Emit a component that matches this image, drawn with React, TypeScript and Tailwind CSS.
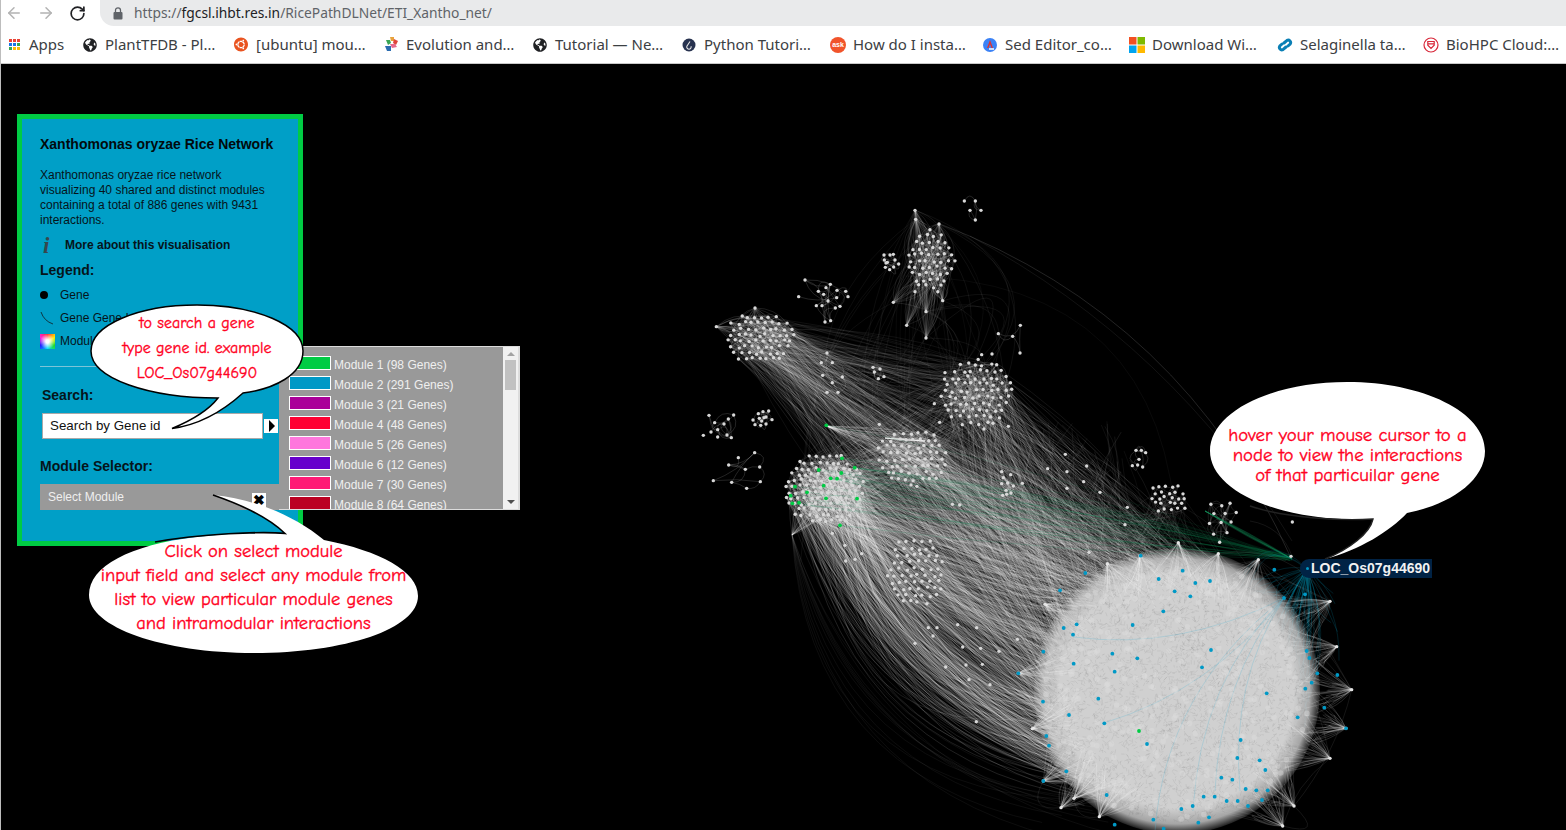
import { ArrowLeft, ArrowRight, RotateCw } from "lucide-react";
import type { ReactNode } from "react";
import { FaGlobeAmericas, FaUbuntu } from "react-icons/fa";

// small seeded random so the graph is the same on every load
let seed = 1337;
const rnd = () => {
  seed = (seed + 0x6d2b79f5) | 0;
  let t = Math.imul(seed ^ (seed >>> 15), 1 | seed);
  t = (t + Math.imul(t ^ (t >>> 7), 61 | t)) ^ t;
  return ((t ^ (t >>> 14)) >>> 0) / 4294967296;
};
const between = (a: number, b: number) => a + rnd() * (b - a);

type Pt = [number, number];
type Edge = { d: string; c: string; o: number; w: number };

const curve = (a: Pt, b: Pt, bend: number) => {
  const dx = b[0] - a[0];
  const dy = b[1] - a[1];
  const len = Math.hypot(dx, dy) || 1;
  const cx = (a[0] + b[0]) / 2 + (dy / len) * bend * 2;
  const cy = (a[1] + b[1]) / 2 - (dx / len) * bend * 2;
  return `M${a[0].toFixed(1)} ${a[1].toFixed(1)}Q${cx.toFixed(1)} ${cy.toFixed(1)} ${b[0].toFixed(1)} ${b[1].toFixed(1)}`;
};

const lattice = (cx: number, cy: number, rx: number, ry: number, step: number) => {
  const out: Pt[] = [];
  for (let y = -ry; y <= ry; y += step * 0.86) {
    const row = Math.round((y + ry) / (step * 0.86));
    for (let x = -rx; x <= rx; x += step) {
      const px = x + (row % 2 ? step / 2 : 0) + between(-1.6, 1.6);
      const py = y + between(-1.6, 1.6);
      if ((px * px) / (rx * rx) + (py * py) / (ry * ry) <= 1) out.push([cx + px, cy + py]);
    }
  }
  return out;
};

const fromZoom6 = (l: number[][]) => l.map(([x, y]): Pt => [690 + x / 3, 190 + y / 3]);
const fromZoom5 = (l: number[][]) => l.map(([x, y]): Pt => [1000 + x / 3, 370 + y / 3]);
const fromZoom8 = (l: number[][]) => l.map(([x, y]): Pt => [770 + x / 3, 430 + y / 3]);
const fromZoom7 = (l: number[][]) => l.map(([x, y]): Pt => [1000 + x / 3, 540 + y / 3]);

const smallGroups: Pt[][] = [
  fromZoom6([[823, 30], [856, 30], [840, 58], [873, 58], [856, 87]]),
  fromZoom6([[582, 192], [600, 192], [610, 190], [615, 207], [626, 219], [588, 216], [583, 207], [586, 229], [599, 236], [611, 228], [592, 214]]),
  fromZoom6([[345, 267], [326, 317], [421, 280], [385, 301], [408, 290], [441, 298], [467, 301], [401, 310], [474, 317], [440, 320], [414, 330], [379, 344], [396, 344], [450, 346], [436, 351], [405, 393], [422, 389]]),
  fromZoom6([[925, 428], [968, 436], [991, 403], [990, 486]]),
  fromZoom6([[411, 486], [394, 515], [427, 515], [398, 553], [457, 558], [427, 575], [411, 604], [444, 604]]),
  fromZoom6([[549, 529], [570, 534], [553, 543], [582, 557], [565, 563]]),
  fromZoom6([[57, 673], [131, 672], [74, 695], [102, 699], [115, 684], [83, 716], [63, 723], [40, 733], [83, 738], [111, 732], [124, 740]]),
  fromZoom6([[205, 668], [219, 662], [236, 660], [189, 687], [208, 682], [222, 680], [228, 678], [246, 686], [195, 701], [212, 703], [228, 699], [215, 690]]),
  fromZoom6([[194, 785], [145, 800], [116, 822], [166, 835], [209, 828], [70, 869], [125, 874], [211, 872], [170, 892]]),
  fromZoom5([[408, 238], [424, 238], [437, 245], [417, 265], [397, 284], [413, 282], [428, 288]]),
  fromZoom8([[695, 122], [722, 131], [695, 158], [713, 156], [730, 165], [757, 157], [708, 178], [723, 186], [698, 193], [710, 190], [700, 140]]),
];
const loose: Pt[] = [
  ...fromZoom6([[675, 58], [677, 85], [747, 99], [610, 334], [650, 403], [708, 362], [758, 329], [708, 441], [675, 302], [79, 407], [195, 351], [875, 491], [906, 489], [765, 545], [733, 638], [749, 694], [955, 706], [568, 700]]),
  ...fromZoom5([[196, 250], [143, 293], [201, 302], [260, 285], [251, 332], [201, 352], [300, 364], [375, 461], [267, 544], [382, 409], [877, 453], [873, 556]]),
  ...fromZoom8([[475, 590], [501, 590], [563, 581], [620, 590], [489, 615], [435, 637], [578, 648], [632, 652], [687, 661], [527, 708], [588, 702], [637, 700], [597, 746], [660, 761], [619, 872], [742, 625], [225, 343], [275, 368], [227, 390], [255, 385], [187, 307], [547, 220], [569, 222]]),
];

const clusterA = lattice(760, 337, 36, 27, 7);
const clusterB = lattice(932, 260, 24, 32, 7.4);
const clusterC = lattice(977, 393, 36, 36, 7.6);
const clusterD = lattice(825, 488, 40, 38, 6.8);
const clusterE = lattice(912, 456, 36, 30, 7.6);
const clusterF = lattice(916, 570, 29, 36, 7.8);
const clusterG = lattice(1169, 497, 20, 17, 6.6);
const clusterH = lattice(1222, 518, 18, 24, 11);

const blueNodes = fromZoom7([[422, 44], [256, 96], [180, 148], [548, 89], [476, 114], [586, 126], [630, 120], [524, 151], [571, 166], [490, 211], [398, 252], [230, 250], [191, 261], [219, 281], [130, 332], [337, 338], [412, 352], [221, 368], [344, 392], [55, 397], [295, 473], [129, 482], [207, 522], [313, 547], [139, 585], [147, 614], [441, 609], [199, 691], [130, 720], [320, 762], [344, 851], [460, 836], [491, 863], [544, 804], [578, 795], [595, 845], [627, 829], [611, 767], [644, 767], [680, 780], [713, 780], [744, 795], [786, 777], [737, 744], [769, 748], [803, 748], [664, 710], [697, 716], [796, 687], [779, 658], [712, 651], [722, 597], [800, 457], [606, 379], [633, 327], [823, 86], [852, 171], [915, 160], [920, 330], [928, 351], [952, 397], [1012, 402], [935, 425], [916, 443], [973, 500], [893, 529], [1038, 562]]);
const greenNodes = [
  ...fromZoom8([[216, 82], [146, 117], [254, 110], [214, 126], [182, 142], [201, 143], [161, 164], [75, 167], [111, 184], [62, 194], [168, 202], [261, 203], [67, 217], [87, 215], [210, 283]]),
  ...fromZoom6([[409, 703]]),
  ...fromZoom7([[417, 570]]),
];

const buildGraph = () => {
  const edges: Edge[] = [];
  const top: Edge[] = [];
  const add = (a: Pt, b: Pt, bend: number, c = "#fff", o = 0.16, w = 0.7) => edges.push({ d: curve(a, b, bend), c, o, w });
  const pick = (l: Pt[]) => l[Math.floor(rnd() * l.length)];
  const toMain = (minA: number, maxA: number): Pt => {
    const t = between(minA, maxA);
    const r = between(105, 135);
    return [1177 + Math.cos(t) * r, 690 + Math.sin(t) * r];
  };

  // inside each module
  const inner: [Pt[], number][] = [[clusterA, 200], [clusterB, 150], [clusterC, 210], [clusterD, 400], [clusterE, 110], [clusterF, 10], [clusterG, 26], [clusterH, 34]];
  inner.forEach(([l, n]) => {
    for (let i = 0; i < n; i++) add(pick(l), pick(l), between(-4, 4), "#fff", 0.18, 0.6);
  });
  smallGroups.forEach((l) => {
    for (let i = 0; i < l.length * 1.5; i++) add(pick(l), pick(l), between(-7, 7), "#fff", 0.28, 0.5);
  });

  // module hubs
  const hubsB = fromZoom6([[675, 58], [677, 85], [747, 99], [610, 334], [650, 403], [708, 362], [758, 329], [708, 441]]);
  hubsB.forEach((h) => {
    for (let i = 0; i < 20; i++) add(h, pick(clusterB), between(-8, 8), "#fff", 0.16, 0.6);
  });
  const hubsA = fromZoom6([[79, 407], [195, 351]]);
  hubsA.forEach((h) => {
    for (let i = 0; i < 20; i++) add(h, pick(clusterA), between(-8, 8), "#fff", 0.2, 0.6);
  });
  for (let i = 0; i < 28; i++) add([792, 534], pick(clusterD), between(-5, 5), "#fff", 0.2, 0.6);

  // long arcs above the modules
  for (let i = 0; i < 16; i++) {
    add(pick(hubsB), pick(clusterC), between(10, 70), "#fff", 0.1, 0.6);
    add(pick(hubsB), [between(800, 900), between(440, 560)], between(-70, 10), "#fff", 0.09, 0.6);
    add([915, 208], [between(880, 1020), between(400, 560)], between(-40, 60), "#fff", 0.07, 0.6);
  }
  add([940, 223], [1290, 555], 50, "#fff", 0.28, 0.5);
  add([970, 235], [1292, 540], 30, "#fff", 0.14, 0.5);
  add([905, 275], [1177, 540], 90, "#fff", 0.08, 0.5);
  add([1292, 555], [1250, 520], -8, "#fff", 0.16, 0.5);

  // bundles between modules and the big one, the outer ones hang down to the lower left
  for (let i = 0; i < 300; i++) add(pick(clusterD), toMain(2.0, 3.1), -(30 + 66 * rnd() * rnd()), "#fff", between(0.11, 0.22), 0.7);
  for (let i = 0; i < 12; i++) add([792, 534], [between(1040, 1120), between(790, 840)], -between(60, 86), "#fff", 0.1, 0.5);
  for (let i = 0; i < 420; i++) add(pick(clusterD), toMain(2.7, 4.3), between(-34, 8), "#fff", between(0.1, 0.19), 0.7);
  for (let i = 0; i < 200; i++) add(pick(clusterA), toMain(3.0, 4.7), between(-22, 22), "#fff", between(0.07, 0.15), 0.7);
  for (let i = 0; i < 100; i++) add(pick(clusterA), pick(clusterC), between(-14, 14), "#fff", 0.1, 0.6);
  for (let i = 0; i < 80; i++) add(pick(clusterA), pick(clusterE), between(-14, 14), "#fff", 0.1, 0.6);
  for (let i = 0; i < 60; i++) add(pick(clusterA), pick(clusterF), between(-14, 14), "#fff", 0.1, 0.6);
  for (let i = 0; i < 340; i++) add(pick(clusterE), toMain(2.9, 4.7), between(-26, 26), "#fff", between(0.09, 0.18), 0.7);
  for (let i = 0; i < 280; i++) add(pick(clusterC), toMain(3.3, 5.1), between(-34, 26), "#fff", between(0.08, 0.18), 0.7);
  for (let i = 0; i < 170; i++) add(pick(clusterF), toMain(2.6, 3.7), between(-20, 20), "#fff", 0.12, 0.7);
  for (let i = 0; i < 120; i++) add(pick(clusterD), pick(clusterE), between(-16, 16), "#fff", 0.13, 0.6);
  for (let i = 0; i < 70; i++) add(pick(clusterD), pick(clusterC), between(-20, 20), "#fff", 0.1, 0.6);
  for (let i = 0; i < 50; i++) add(pick(clusterG), toMain(3.6, 5.4), between(-20, 20), "#fff", 0.1, 0.6);
  for (let i = 0; i < 34; i++) add([827, 425], pick(clusterE), between(-3, 3), "#fff", 0.2, 0.7);
  for (let i = 0; i < 18; i++) add([885, 437], [925, 440], between(-1, 1), "#fff", 0.16, 0.8);
  for (let i = 0; i < 55; i++) add(pick(clusterC), pick(clusterE), between(-20, 20), "#fff", 0.11, 0.6);

  // loose field of lines filling the gaps right of the modules
  for (let i = 0; i < 260; i++) add([between(850, 1130), between(420, 540)], [between(1000, 1190), between(510, 640)], between(-25, 25), "#fff", between(0.08, 0.15), 0.6);
  for (let i = 0; i < 140; i++) add(pick(clusterD), [between(1020, 1180), between(530, 620)], between(-18, 18), "#fff", 0.12, 0.6);
  for (let i = 0; i < 90; i++) add(pick(clusterA), [between(1000, 1130), between(470, 600)], between(-18, 18), "#fff", 0.09, 0.6);

  // green links of module 1
  for (let i = 0; i < 30; i++) add(pick(greenNodes.slice(0, 16)), [1290 + between(-4, 4), 557 + between(-3, 3)], between(-14, 18), "#0f8a55", between(0.16, 0.38), 0.6);
  for (let i = 0; i < 8; i++) add([1205, 510], [1292, 558], between(-2, 2), "#12915a", 0.4, 0.7);

  // teal links going out of the hovered node
  for (let i = 0; i < 40; i++) add([1307, 568], toMain(-1.1, 0.4), between(-24, 24), "#00809e", 0.35, 0.6);
  for (let i = 0; i < 24; i++) add([1307, 568], [between(1240, 1340), between(570, 720)], between(-10, 10), "#00809e", 0.4, 0.6);

  // big module: rim hubs fan over its edge
  const rim = fromZoom7([[535, 5], [322, 68], [655, 38], [775, 56], [135, 190], [55, 397], [97, 563], [130, 720], [183, 800], [298, 827], [882, 795], [990, 652], [1038, 562], [1055, 446], [1010, 317], [990, 181], [848, 855], [222, 772], [420, 44]]);
  rim.forEach((h) => {
    const dir = Math.atan2(690 - h[1], 1177 - h[0]);
    for (let i = 0; i < 30; i++) {
      const t = dir + between(-0.7, 0.7);
      const r = between(15, 55);
      top.push({ d: curve(h, [h[0] + Math.cos(t) * r, h[1] + Math.sin(t) * r], between(-3, 3)), c: "#fff", o: 0.22, w: 0.7 });
    }
  });
  for (let i = 0; i < 70; i++) add(pick(rim), pick(rim), between(-22, 22), "#fff", 0.14, 0.6);

  const bigNodes: Pt[] = [];
  for (let i = 0; i < 290; i++) {
    const t = rnd() * 6.283;
    const r = 133 * Math.sqrt(rnd());
    bigNodes.push([1177 + Math.cos(t) * r, 690 + Math.sin(t) * r]);
  }
  const flecks: string[] = [];
  for (let i = 0; i < 4200; i++) {
    const t = rnd() * 6.283;
    const r = 130 * Math.sqrt(rnd());
    const x = 1177 + Math.cos(t) * r;
    const y = 690 + Math.sin(t) * r;
    const a = rnd() * 3.14;
    const l = between(2, 5);
    flecks.push(`M${x.toFixed(1)} ${y.toFixed(1)}l${(Math.cos(a) * l).toFixed(1)} ${(Math.sin(a) * l).toFixed(1)}`);
  }
  return { edges, top, bigNodes, flecks: flecks.join(""), rim };
};

const graph = buildGraph();
const grayNodes: Pt[] = [clusterA, clusterB, clusterC, clusterD, clusterE, clusterF, clusterG, clusterH, ...smallGroups, loose].flat();

const Network = () => (
  <svg className="absolute inset-0" width="1566" height="767" viewBox="0 63 1566 767">
    <defs>
      <radialGradient id="bigFill">
        <stop offset="0.82" stopColor="#d0d0d0" />
        <stop offset="0.93" stopColor="#cfcfcf" stopOpacity="0.8" />
        <stop offset="1" stopColor="#cbcbcb" stopOpacity="0.15" />
      </radialGradient>
    </defs>
    {graph.edges.map((e, i) => (
      <path key={i} d={e.d} fill="none" stroke={e.c} strokeOpacity={e.o} strokeWidth={e.w} />
    ))}
    <circle cx="1177" cy="690" r="143" fill="url(#bigFill)" />
    <path d={graph.flecks} stroke="#000" strokeOpacity="0.07" strokeWidth="0.8" />
    {graph.top.map((e, i) => (
      <path key={i} d={e.d} fill="none" stroke={e.c} strokeOpacity={e.o} strokeWidth={e.w} />
    ))}
    <g fill="none" stroke="#5bb8d4" strokeOpacity="0.4" strokeWidth="0.7">
      <path d="M1073 636Q1180 650 1284 597" />
      <path d="M1104 722Q1210 690 1284 597" />
      <path d="M1155 830Q1165 690 1284 597" />
      <path d="M1193 810Q1200 680 1284 597" />
      <path d="M1215 790Q1220 680 1284 597" />
      <path d="M1240 790Q1230 680 1284 597" />
    </g>
    {graph.bigNodes.map((p, i) => (
      <circle key={i} cx={p[0]} cy={p[1]} r="2.8" fill="#dedede" fillOpacity="0.4" />
    ))}
    {grayNodes.map((p, i) => (
      <circle key={i} cx={p[0]} cy={p[1]} r="1.7" fill="#d8d8d8" />
    ))}
    {graph.rim.map((p, i) => (
      <circle key={i} cx={p[0]} cy={p[1]} r="1.7" fill="#e4e4e4" />
    ))}
    {blueNodes.map((p, i) => (
      <circle key={i} cx={p[0]} cy={p[1]} r="1.9" fill="#0099c6" />
    ))}
    {greenNodes.map((p, i) => (
      <circle key={i} cx={p[0]} cy={p[1]} r="1.9" fill="#00cc44" />
    ))}
  </svg>
);

const GlobeIcon = () => <FaGlobeAmericas className="size-[14px] text-[#202124]" />;

const Bookmark = ({ icon, label, width }: { icon: ReactNode; label: string; width: string }) => (
  <div className={`flex items-center gap-[8px] shrink-0 ${width}`}>
    <span className="flex items-center justify-center size-[14px] shrink-0">{icon}</span>
    <span className="whitespace-nowrap">{label}</span>
  </div>
);

const BrowserChrome = () => (
  <>
    <div className="flex items-center h-[26px] bg-white pl-[4px] shrink-0">
      <ArrowLeft className="size-[18px] text-[#b3b3b3]" strokeWidth={2} />
      <ArrowRight className="size-[18px] ml-[14px] text-[#b3b3b3]" strokeWidth={2} />
      <RotateCw className="size-[17px] ml-[14px] text-[#202124]" strokeWidth={2.4} />
      <div className="flex items-center flex-1 h-[26px] ml-[14px] pl-[13px] rounded-bl-[14px] bg-[#e9eaeb]">
        <svg width="10" height="13" viewBox="0 0 10 13" className="text-[#5f6368]">
          <rect x="0.5" y="5" width="9" height="7.5" rx="1" fill="currentColor" />
          <path d="M2.5 5V3.3a2.5 2.5 0 0 1 5 0V5" fill="none" stroke="currentColor" strokeWidth="1.3" />
        </svg>
        <span className="ml-[11px] text-[13.8px] text-[#5f6368] whitespace-nowrap font-['Noto_Sans',sans-serif]">
          https://<span className="text-[#202124]">fgcsl.ihbt.res.in</span>/RicePathDLNet/ETI_Xantho_net/
        </span>
      </div>
    </div>
    <div className="flex items-center h-[38px] pl-[6px] bg-white border-b border-[#c9c9c9] shrink-0 text-[15px] text-[#3c4043] font-['Noto_Sans',sans-serif]">
      <Bookmark
        width="w-[76px]"
        label="Apps"
        icon={
          <span className="grid grid-cols-3 gap-[1px]">
            {["bg-[#ea4335]", "bg-[#ea4335]", "bg-[#ea4335]", "bg-[#1a73e8]", "bg-[#1a73e8]", "bg-[#34a853]", "bg-[#34a853]", "bg-[#fbbc04]", "bg-[#fbbc04]"].map((c, i) => (
              <i key={i} className={`block size-[3px] ${c}`} />
            ))}
          </span>
        }
      />
      <Bookmark width="w-[151px]" label="PlantTFDB - Pl…" icon={<GlobeIcon />} />
      <Bookmark width="w-[150px]" label="[ubuntu] mou…" icon={<FaUbuntu className="size-[15px] text-[#e95420]" />} />
      <Bookmark
        width="w-[149px]"
        label="Evolution and…"
        icon={
          <svg width="14" height="15" viewBox="0 0 14 15">
            <path d="M6 0h4v4H7z" fill="#e8a33d" />
            <path d="M10 2l4 2-2 4-3-2z" fill="#e0453a" />
            <path d="M2 3h4l1 3-3 2z" fill="#3aa655" />
            <path d="M6 7h5l2 3-5 1z" fill="#e66a8c" />
            <path d="M1 9h6v5H3z" fill="#2b6cb0" />
          </svg>
        }
      />
      <Bookmark width="w-[149px]" label="Tutorial — Ne…" icon={<GlobeIcon />} />
      <Bookmark
        width="w-[149px]"
        label="Python Tutori…"
        icon={
          <svg width="14" height="14" viewBox="0 0 14 14">
            <circle cx="7" cy="7" r="6.5" fill="#27324f" />
            <path d="M8 3.5 5 8a2.2 2.2 0 1 0 4 .3" fill="none" stroke="#e6e6e6" strokeWidth="1.1" />
          </svg>
        }
      />
      <Bookmark
        width="w-[152px]"
        label="How do I insta…"
        icon={
          <span className="flex items-center justify-center shrink-0 size-[16px] rounded-full bg-[#f1542b] text-[7px] font-bold leading-none text-white font-['Liberation_Sans',sans-serif]">
            ask
          </span>
        }
      />
      <Bookmark
        width="w-[147px]"
        label="Sed Editor_co…"
        icon={
          <svg width="14" height="14" viewBox="0 0 14 14">
            <circle cx="7" cy="7" r="7" fill="#3b82f6" />
            <path d="M7 2 4 10h1.5L7 6l1.5 4H10z" fill="#e0312d" />
            <rect x="6" y="10" width="5" height="2" fill="#cfe0fb" />
          </svg>
        }
      />
      <Bookmark
        width="w-[148px]"
        label="Download Wi…"
        icon={
          <svg width="16" height="16" viewBox="0 0 16 16" className="shrink-0">
            <rect width="7.5" height="7.5" fill="#f25022" />
            <rect x="8.5" width="7.5" height="7.5" fill="#7fba00" />
            <rect y="8.5" width="7.5" height="7.5" fill="#00a4ef" />
            <rect x="8.5" y="8.5" width="7.5" height="7.5" fill="#ffb900" />
          </svg>
        }
      />
      <Bookmark
        width="w-[146px]"
        label="Selaginella ta…"
        icon={
          <svg width="16" height="16" viewBox="0 0 16 16" fill="none" stroke="#0a7fb5" strokeWidth="3" strokeLinecap="round" className="shrink-0">
            <path d="M7 6 10 3.4a2.5 2.5 0 0 1 3.2 3.6L11 9" />
            <path d="M9 10 6 12.6a2.5 2.5 0 0 1-3.2-3.6L5 7" />
          </svg>
        }
      />
      <Bookmark
        width="w-[132px]"
        label="BioHPC Cloud:…"
        icon={
          <svg width="16" height="16" viewBox="0 0 16 16" fill="none" stroke="#d8283a" strokeWidth="1.2" className="shrink-0">
            <circle cx="8" cy="8" r="7" />
            <path d="M4.8 4.5h6.4v3.7L8 11.5 4.8 8.2zM4.8 6.8h6.4" />
          </svg>
        }
      />
    </div>
  </>
);

const modules = [
  { n: "Module 1 (98 Genes)", c: "bg-[#00cc44]" },
  { n: "Module 2 (291 Genes)", c: "bg-[#0099c6]" },
  { n: "Module 3 (21 Genes)", c: "bg-[#aa0099]" },
  { n: "Module 4 (48 Genes)", c: "bg-[#ff0033]" },
  { n: "Module 5 (26 Genes)", c: "bg-[#ff77dd]" },
  { n: "Module 6 (12 Genes)", c: "bg-[#6600cc]" },
  { n: "Module 7 (30 Genes)", c: "bg-[#ff1a75]" },
  { n: "Module 8 (64 Genes)", c: "bg-[#bb0022]" },
];

const ModuleList = () => (
  <div className="absolute left-[279px] top-[282px] flex w-[241px] h-[164px] overflow-hidden bg-[#999999] border-r-2 border-t border-b border-[#dcdcdc] font-['Liberation_Sans',sans-serif]">
    <div className="flex-1 pl-[10px] pt-[8px]">
      {modules.map((m) => (
        <div key={m.n} className="flex items-start h-[20px] text-[12px] leading-[20px] text-[#efefef] whitespace-nowrap">
          <span className={`block w-[42px] h-[14px] mt-[1px] mr-[3px] border border-white ${m.c}`} />
          <span>{m.n}</span>
        </div>
      ))}
    </div>
    <div className="flex flex-col items-center w-[15px] bg-[#f1f1f1] shrink-0">
      <span className="mt-[5px] w-0 h-0 border-x-[4px] border-x-transparent border-b-[4px] border-b-[#a3a3a3]" />
      <span className="mt-[4px] w-[11px] h-[30px] bg-[#c1c1c1]" />
      <span className="mt-auto mb-[5px] w-0 h-0 border-x-[4px] border-x-transparent border-t-[4px] border-t-[#505050]" />
    </div>
  </div>
);

const SidePanel = () => (
  <div className="absolute left-[17px] top-[50px] w-[286px] h-[432px] bg-[#009fc7] border-[5px] border-[#00cc44] pl-[18px] pr-[12px] font-['Liberation_Sans',sans-serif] text-[#06141a]">
    <h1 className="mt-[17px] text-[14px] leading-[16px] font-bold text-[#020a0d]">Xanthomonas oryzae Rice Network</h1>
    <p className="mt-[16px] text-[12px] leading-[15px]">
      Xanthomonas oryzae rice network
      <br />
      visualizing 40 shared and distinct modules
      <br />
      containing a total of 886 genes with 9431
      <br />
      interactions.
    </p>
    <div className="flex items-center mt-[9px] h-[16px] text-[12px] font-bold">
      <span className="w-[25px] pl-[3px] text-[23px] leading-none font-bold italic text-[#37474d] font-['Liberation_Serif',serif]">i</span>
      More about this visualisation
    </div>
    <div className="mt-[8px] text-[14px] leading-[18px] font-bold">Legend:</div>
    <div className="flex items-center mt-[7px] h-[18px] text-[12px]">
      <span className="block size-[8px] mr-[12px] rounded-full bg-black" />
      Gene
    </div>
    <div className="flex items-center mt-[5px] h-[18px] text-[12px]">
      <svg width="14" height="14" viewBox="0 0 14 14" className="mr-[6px]">
        <path d="M1 1Q4 10 13 13" fill="none" stroke="#102a33" strokeWidth="0.9" />
      </svg>
      Gene Gene Interaction
    </div>
    <div className="flex items-center mt-[5px] h-[18px] text-[12px]">
      <span className="block size-[15px] mr-[5px] bg-[radial-gradient(circle,#fff_15%,transparent_72%),conic-gradient(#ff2a2a,#ffee00,#22dd22,#00ddff,#2222ff,#ff22dd,#ff2a2a)]" />
      Module
    </div>
    <hr className="mt-[16px] w-[240px] border-[#7cc4d8]" />
    <div className="mt-[19px] ml-[2px] text-[14px] leading-[18px] font-bold">Search:</div>
    <div className="flex items-center mt-[9px] ml-[2px]">
      <div className="flex items-center w-[221px] h-[26px] pl-[7px] bg-white border border-[#a9a9a9] text-[13.33px] text-[#111]">Search by Gene id</div>
      <span className="flex items-center justify-center w-[14px] h-[14px] ml-[1px] bg-white">
        <span className="w-0 h-0 ml-[1px] border-y-[6px] border-y-transparent border-l-[6px] border-l-black" />
      </span>
    </div>
    <div className="mt-[18px] text-[14px] leading-[18px] font-bold">Module Selector:</div>
    <div className="flex items-center justify-between w-[240px] h-[26px] mt-[9px] pl-[8px] pr-[14px] bg-[#999999] text-[12px] text-[#efefef]">
      Select Module
      <span className="flex items-center justify-center size-[14px] mt-[6px] bg-white text-[14px] leading-none font-bold text-black">✖</span>
    </div>
  </div>
);

// the speech bubbles are drawings pasted over the page
const Bubbles = () => (
  <svg className="absolute inset-0 pointer-events-none" width="1566" height="767" viewBox="0 63 1566 767">
    <path
      d="M91 350C91 324 138 304 197 304C256 304 303 324 303 350C303 374 274 388 243 392C222 411 198 424 172 427.5C190 420 208 410 218 397C150 397 91 378 91 350Z"
      fill="#fff"
      stroke="#000"
      strokeWidth="1.5"
    />
    <path
      d="M89 594C89 565 130 544 196 536C230 532 262 531 285 532.5C270 518 245 505 213 494C255 498 295 515 324 539C380 550 418 570 418 595C418 628 345 652 254 652C162 652 89 626 89 594Z"
      fill="#fff"
    />
    <path d="M155 541C200 533 262 530 285 532.5C270 518 245 505 213 494" fill="none" stroke="#000" strokeWidth="1.6" />
    <path
      d="M1210 450C1210 411 1271 381 1347 381C1423 381 1485 411 1485 450C1485 482 1445 505 1407 512C1390 530 1360 549 1325 558C1350 548 1370 532 1373 518C1280 522 1210 490 1210 450Z"
      fill="#fff"
    />
    <path d="M1250 505C1285 517 1340 520 1373 518C1370 532 1350 548 1325 558" fill="none" stroke="#222" strokeWidth="1.4" />
  </svg>
);

const BubbleText = ({ className, lines }: { className: string; lines: string[] }) => (
  <div className={`absolute text-center whitespace-nowrap text-[#ff0022] [-webkit-text-stroke:0.35px_#ff0022] font-['Comic_Sans_MS','Comic_Neue',cursive] ${className}`}>
    {lines.map((l) => (
      <div key={l}>{l}</div>
    ))}
  </div>
);

export default function App() {
  return (
    <div className="flex flex-col w-[1566px] h-[830px] overflow-hidden border-l border-[#bdbdbd] bg-white">
      <BrowserChrome />
      <div className="relative flex-1 -ml-[1px] bg-black">
        <Network />
        <SidePanel />
        <ModuleList />
        <Bubbles />
        <BubbleText className="left-[91px] top-[247px] w-[212px] text-[16px] leading-[25px]" lines={["to search a gene", "type gene id. example", "LOC_Os07g44690"]} />
        <BubbleText className="left-[89px] top-[475px] w-[329px] text-[18.5px] leading-[24px]" lines={["Click on select module", "input field and select any module from", "list to view particular module genes", "and intramodular interactions"]} />
        <BubbleText className="left-[1210px] top-[361px] w-[275px] text-[18.8px] leading-[20px]" lines={["hover your mouse cursor to a", "node to view the interactions", "of that particuilar gene"]} />
        <div className="absolute left-[1300px] top-[495px] flex items-center w-[132px] h-[19px] pl-[6px] rounded-l-[9px] bg-[#012345] text-[14px] font-bold text-[#f2f2f2] font-['Liberation_Sans',sans-serif]">
          <span className="block size-[3px] mr-[2px] rounded-full bg-[#0099c6]" />
          LOC_Os07g44690
        </div>
      </div>
    </div>
  );
}
